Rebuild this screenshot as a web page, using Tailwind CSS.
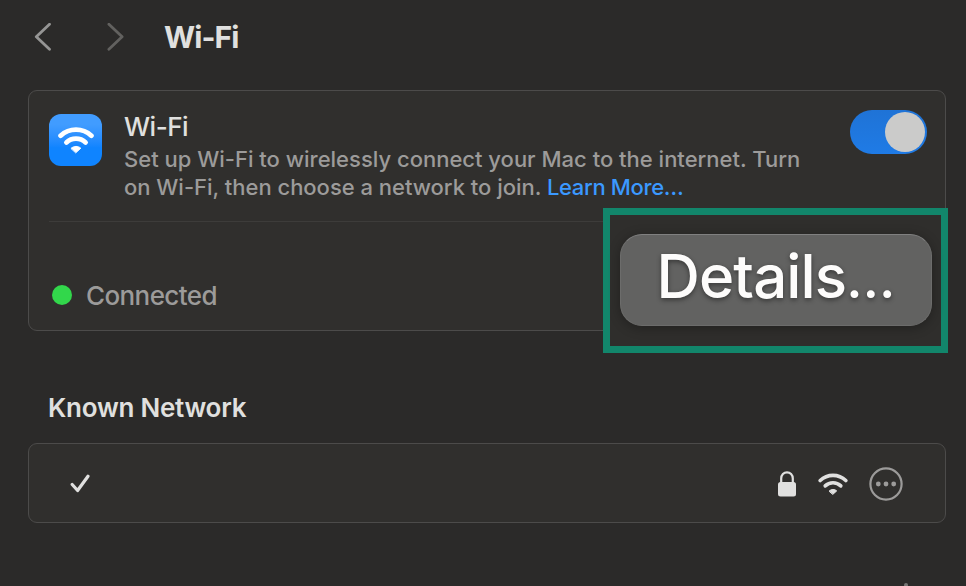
<!DOCTYPE html>
<html lang="en">
<head>
  <meta charset="UTF-8" />
  <meta name="viewport" content="width=device-width, initial-scale=1.0" />
  <title>Wi-Fi</title>
  <script src="https://cdn.jsdelivr.net/npm/@tailwindcss/browser@4"></script>
</head>
<body class="relative h-[586px] w-[966px] overflow-hidden bg-[#2b2a29] font-['Inter','Liberation_Sans',sans-serif] text-[#e0e0df]">

  <!-- Toolbar -->
  <header class="flex h-[74px] items-center pl-[34px]">
    <svg class="h-7 w-[18px] text-[#959594]" viewBox="0 0 18 28" fill="none" stroke="currentColor" stroke-width="2.8" stroke-linecap="round" stroke-linejoin="round"><path d="M15.5 1.2 2.3 13.7l13.2 12.5" /></svg>
    <svg class="ml-[54px] h-7 w-[18px] text-[#62615f]" viewBox="0 0 18 28" fill="none" stroke="currentColor" stroke-width="2.8" stroke-linecap="round" stroke-linejoin="round"><path d="M2.9 1.2 16.1 13.7 2.9 26.2" /></svg>
    <h1 class="ml-10 text-[30px] leading-9 font-bold tracking-[-0.9px]">Wi-Fi</h1>
  </header>

  <!-- Wi-Fi card -->
  <section class="mt-4 ml-7 h-[241px] w-[918px] rounded-[9px] border border-[#4c4b4a] bg-[#302f2d] pr-[18px] pl-5">
    <div class="flex h-[131px] border-b border-[#3d3c3a] pt-[19px]">
      <div class="mt-1 flex h-[52px] w-[53px] shrink-0 items-center justify-center rounded-xl bg-gradient-to-b from-[#419cff] from-20% to-[#0f84ff] to-65%">
        <svg class="h-[27px] w-[36px]" viewBox="0 0 36 27" fill="none" stroke="#fff" stroke-width="4.8" stroke-linecap="round">
          <path d="M2.6 8.7a22.8 22.8 0 0 1 30.8 0" />
          <path d="M8.4 15.4a14 14 0 0 1 19.2 0" />
          <path d="M13.2 21.2c2.7-2.4 6.9-2.4 9.6 0L18 25.6z" fill="#fff" stroke-width="1" stroke-linejoin="round" />
        </svg>
      </div>
      <div class="ml-[22px] w-[700px]">
        <h2 class="mb-px text-[26px] leading-[34px] font-medium tracking-[-0.5px]">Wi-Fi</h2>
        <p class="text-[22px] leading-7 font-medium whitespace-nowrap text-[#9c9b9a]">Set up Wi-Fi to wirelessly connect your Mac to the internet. Turn<br /><span class="tracking-[-0.02px]">on Wi-Fi, then choose a network to join. </span><a class="tracking-[-0.35px] text-[#3b99ff]">Learn More…</a></p>
      </div>
      <div class="ml-auto flex h-11 w-[77px] items-center justify-end rounded-full bg-gradient-to-b from-[#1f73d6] to-[#1f7be6] pr-0.5">
        <span class="size-10 rounded-full bg-[#cbcbca]"></span>
      </div>
    </div>
    <div class="flex items-start pt-14 pl-[3px]">
      <span class="mt-[7px] size-5 rounded-full bg-[#32d74b]"></span>
      <span class="ml-3.5 pt-px text-[26px] leading-[34px] font-medium tracking-[-0.6px] text-[#9c9b9a]">Connected</span>
    </div>
  </section>

  <!-- Highlighted details button -->
  <div class="absolute top-[208px] left-[603px] flex h-[145px] w-[345px] justify-center border-[7px] border-[#12866b] bg-[#2f2e2c] pt-[19px]">
    <button class="h-[92px] w-[312px] rounded-[22px] border border-[#6c6c6b] border-t-[#808080] bg-[#626261] pb-2 text-[60px] leading-none font-medium tracking-[-0.9px] text-[#fdfcfb] shadow-[0_2px_12px_rgba(0,0,0,0.3)]">
      <span class="text-shadow-[0_2px_5px_rgba(0,0,0,0.45)]">Details<span class="text-[54px]">…</span></span>
    </button>
  </div>

  <h3 class="mt-[60px] ml-12 text-[26px] leading-[34px] font-semibold tracking-[-0.25px]">Known Network</h3>

  <!-- Known network row -->
  <section class="mt-[18px] ml-7 flex h-[80px] w-[918px] items-center rounded-[9px] border border-[#4c4b4a] bg-[#302f2d] pt-px pr-[42px] pl-[41px]">
    <svg class="h-[19px] w-5" viewBox="0 0 20 19" fill="none" stroke="currentColor" stroke-width="3.2" stroke-linecap="round" stroke-linejoin="round"><path d="m2.2 10.5 5.4 6L18 2.2" /></svg>
    <svg class="ml-auto h-[26px] w-[18px]" viewBox="0 0 18 26">
      <rect x="0" y="11" width="18" height="14.5" rx="2.5" fill="currentColor" />
      <path d="M3.2 12V7.5a5.8 6.2 0 0 1 11.6 0V12" fill="none" stroke="currentColor" stroke-width="2.2" />
    </svg>
    <svg class="ml-[22px] h-[22px] w-[30px]" viewBox="0 0 30 22" fill="none" stroke="currentColor" stroke-width="3.6" stroke-linecap="round">
      <path d="M2.2 7.5a18.6 18.6 0 0 1 25.6 0" />
      <path d="M7.2 12.9a11.2 11.2 0 0 1 15.6 0" />
      <path d="M11.3 17.9c2.1-1.9 5.3-1.9 7.4 0L15 21.2z" fill="currentColor" stroke-width="1" stroke-linejoin="round" />
    </svg>
    <svg class="ml-[21px] size-[34px] text-[#9c9b9a]" viewBox="0 0 34 34">
      <circle cx="17" cy="17" r="15.6" fill="none" stroke="currentColor" stroke-width="2.2" />
      <g fill="currentColor"><circle cx="9.3" cy="17" r="2.4" /><circle cx="17" cy="17" r="2.4" /><circle cx="24.7" cy="17" r="2.4" /></g>
    </svg>
  </section>

  <!-- top of the next section's control -->
  <span class="absolute top-[583px] left-[904px] size-1 rounded-full bg-[#777675]"></span>
</body>
</html>
